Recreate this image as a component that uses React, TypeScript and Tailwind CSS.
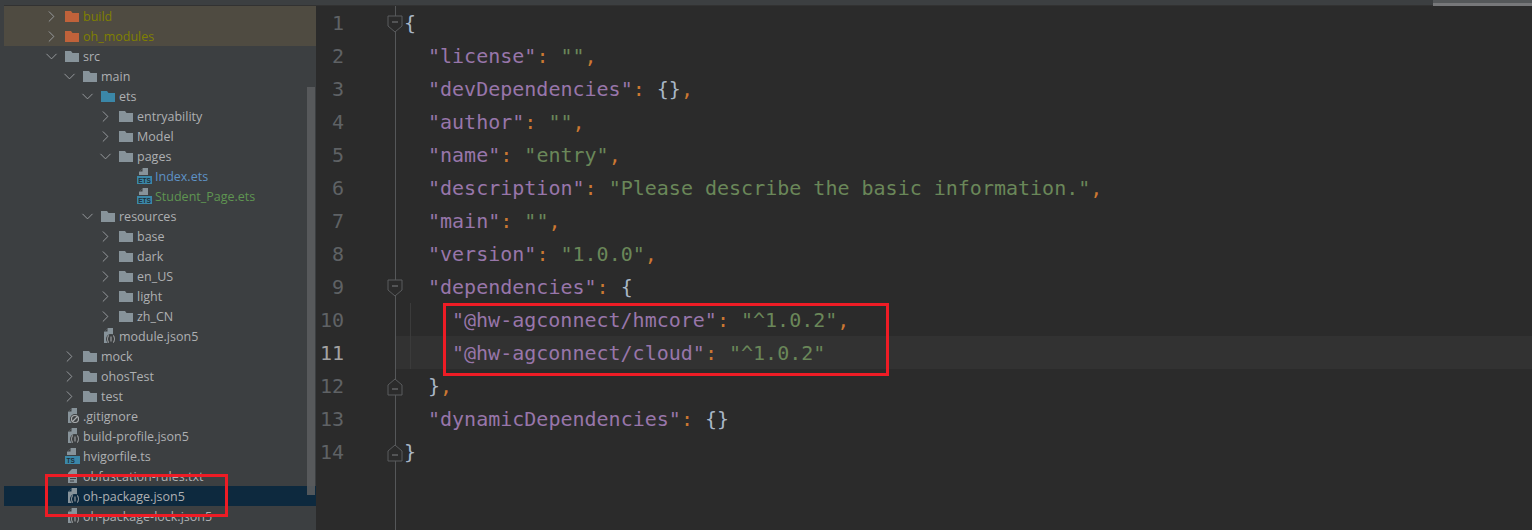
import { ChevronDown, ChevronRight } from 'lucide-react'

type Kind = 'folder' | 'ets' | 'ts' | 'json' | 'git' | 'txt'

interface TreeRow {
  name: string
  depth: number
  kind: Kind
  open?: boolean
  color?: string
  iconColor?: string
  tint?: string
}

const treeRows: TreeRow[] = [
  { name: 'build', depth: 0, kind: 'folder', open: false, color: '#808000', iconColor: '#c0623a', tint: '#4f4b41' },
  { name: 'oh_modules', depth: 0, kind: 'folder', open: false, color: '#808000', iconColor: '#c0623a', tint: '#4f4b41' },
  { name: 'src', depth: 0, kind: 'folder', open: true },
  { name: 'main', depth: 1, kind: 'folder', open: true },
  { name: 'ets', depth: 2, kind: 'folder', open: true, iconColor: '#3b87a8' },
  { name: 'entryability', depth: 3, kind: 'folder', open: false },
  { name: 'Model', depth: 3, kind: 'folder', open: false },
  { name: 'pages', depth: 3, kind: 'folder', open: true },
  { name: 'Index.ets', depth: 4, kind: 'ets', color: '#5e92c6' },
  { name: 'Student_Page.ets', depth: 4, kind: 'ets', color: '#5f9551' },
  { name: 'resources', depth: 2, kind: 'folder', open: true },
  { name: 'base', depth: 3, kind: 'folder', open: false },
  { name: 'dark', depth: 3, kind: 'folder', open: false },
  { name: 'en_US', depth: 3, kind: 'folder', open: false },
  { name: 'light', depth: 3, kind: 'folder', open: false },
  { name: 'zh_CN', depth: 3, kind: 'folder', open: false },
  { name: 'module.json5', depth: 2, kind: 'json' },
  { name: 'mock', depth: 1, kind: 'folder', open: false },
  { name: 'ohosTest', depth: 1, kind: 'folder', open: false },
  { name: 'test', depth: 1, kind: 'folder', open: false },
  { name: '.gitignore', depth: 0, kind: 'git' },
  { name: 'build-profile.json5', depth: 0, kind: 'json' },
  { name: 'hvigorfile.ts', depth: 0, kind: 'ts' },
  { name: 'obfuscation-rules.txt', depth: 0, kind: 'txt' },
  { name: 'oh-package.json5', depth: 0, kind: 'json', tint: '#0d293e' },
  { name: 'oh-package-lock.json5', depth: 0, kind: 'json' },
]

function RowIcon({ kind, color, bg }: { kind: Kind; color?: string; bg: string }) {
  if (kind === 'folder') {
    return (
      <svg width="14" height="11" viewBox="0 0 14 11" className="shrink-0">
        <path d="M0 0h6l1.500 2H14v9H0z" fill={color ?? '#87939a'} />
      </svg>
    )
  }
  if (kind === 'ets' || kind === 'ts') {
    return (
      <svg width="15" height="16" viewBox="0 0 15 16" className="shrink-0">
        <path d="M6 0h5v7H2V4z" fill="#87939a" />
        <path d="M5.500 0.500 2.500 3.500h3z" fill={bg} />
        <rect x="0" y="8" width="15" height="8" fill="#3b87a8" />
        <text x={kind === 'ets' ? 7.5 : 1.5} y="14.500" fontSize="6.500" fontWeight="700" fill="#1f2f38" textAnchor={kind === 'ets' ? 'middle' : 'start'} fontFamily="Liberation Sans, sans-serif">{kind === 'ets' ? 'ETS' : 'TS'}</text>
      </svg>
    )
  }
  if (kind === 'txt') {
    return (
      <svg width="15" height="16" viewBox="0 0 15 16" className="shrink-0">
        <path d="M7 1h5v14H3V5z" fill="#87939a" />
        <path d="M5 8h6M5 10.500h6M5 13h4" stroke="#3c3f41" strokeWidth="1.200" />
      </svg>
    )
  }
  return (
    <svg width="15" height="16" viewBox="0 0 15 16" className="shrink-0">
      <path d="M7 0h5v15H3V4z" fill="#87939a" />
      <path d="M6.500 0.500 3.500 3.500h3z" fill={bg} />
      <circle cx="10" cy="11" r="5" fill={bg} />
      {kind === 'git' ? (
        <g fill="none" stroke="#a9acae" strokeWidth="1.200">
          <circle cx="10" cy="11" r="3.500" />
          <path d="M7.500 13.500l5-5" />
        </g>
      ) : (
        <g fill="none" stroke="#a9acae" strokeWidth="1">
          <path d="M8 7.500c-2 .5-.5 3-2 3.500 1.500.5 0 3 2 3.500" />
          <path d="M12 7.500c2 .5.5 3 2 3.500-1.500.5 0 3-2 3.500" />
          <path d="M10 8.500v5" />
        </g>
      )}
    </svg>
  )
}

function ProjectTree() {
  return (
    <div className="relative w-[316px] shrink-0 bg-[#3c3f41] pl-[4px] font-['Open_Sans','Liberation_Sans',sans-serif] text-[12.5px] overflow-hidden">
      <div className="h-[6px] border-b border-[#323232]" />
      {treeRows.map((row) => (
        <div
          key={row.name}
          className="flex h-[20px] items-center"
          style={{ backgroundColor: row.tint, paddingLeft: 40 + row.depth * 18 }}
        >
          <div className="flex w-[14px] shrink-0 justify-center text-[#9a9da0]">
            {row.kind === 'folder' && (row.open
              ? <ChevronDown size={19} strokeWidth={1.2} className="shrink-0" />
              : <ChevronRight size={19} strokeWidth={1.2} className="shrink-0" />)}
          </div>
          <div className="ml-[7px] flex w-[18px] shrink-0">
            <RowIcon kind={row.kind} color={row.iconColor} bg={row.tint ?? '#3c3f41'} />
          </div>
          <span className="whitespace-nowrap pt-[2px]" style={{ color: row.color ?? '#aeb0b2' }}>{row.name}</span>
        </div>
      ))}
      <div className="absolute left-[307px] top-[87px] h-[408px] w-[8px] bg-[#5a5c5e]/90" />
      <div className="absolute left-[45px] top-[474px] h-[43px] w-[183px] border-[3px] border-[#ee1c25]" />
    </div>
  )
}

const K = ({ children }: { children: string }) => <span className="text-[#9876aa]">{children}</span>
const S = ({ children }: { children: string }) => <span className="text-[#6a8759]">{children}</span>
const P = ({ children }: { children: string }) => <span className="text-[#cc7832]">{children}</span>
const B = ({ children }: { children: string }) => <span className="text-[#a9b7c6]">{children}</span>

type Fold = 'open' | 'close' | undefined

const codeLines: { fold?: Fold; indent: number; content: React.ReactNode }[] = [
  { fold: 'open', indent: 0, content: <B>{'{'}</B> },
  { indent: 1, content: <><K>"license"</K><P>: </P><S>""</S><P>,</P></> },
  { indent: 1, content: <><K>"devDependencies"</K><P>: </P><B>{'{}'}</B><P>,</P></> },
  { indent: 1, content: <><K>"author"</K><P>: </P><S>""</S><P>,</P></> },
  { indent: 1, content: <><K>"name"</K><P>: </P><S>"entry"</S><P>,</P></> },
  { indent: 1, content: <><K>"description"</K><P>: </P><S>"Please describe the basic information."</S><P>,</P></> },
  { indent: 1, content: <><K>"main"</K><P>: </P><S>""</S><P>,</P></> },
  { indent: 1, content: <><K>"version"</K><P>: </P><S>"1.0.0"</S><P>,</P></> },
  { fold: 'open', indent: 1, content: <><K>"dependencies"</K><P>: </P><B>{'{'}</B></> },
  { indent: 2, content: <><K>"@hw-agconnect/hmcore"</K><P>: </P><S>"^1.0.2"</S><P>,</P></> },
  { indent: 2, content: <><K>"@hw-agconnect/cloud"</K><P>: </P><S>"^1.0.2"</S></> },
  { fold: 'close', indent: 1, content: <><B>{'}'}</B><P>,</P></> },
  { indent: 1, content: <><K>"dynamicDependencies"</K><P>: </P><B>{'{}'}</B></> },
  { fold: 'close', indent: 0, content: <B>{'}'}</B> },
]

function FoldMark({ type }: { type: 'open' | 'close' }) {
  const d = type === 'open' ? 'M1 1h14v10l-7 6-7-6z' : 'M1 17h14V7L8 1 1 7z'
  return (
    <svg width="16" height="18" viewBox="0 0 16 18" className="absolute -right-[8px] top-[9px]">
      <path d={d} fill="#2b2b2b" stroke="#5a5c5e" />
      <path d={type === 'open' ? 'M5 7h6' : 'M5 11h6'} stroke="#7d7f81" />
    </svg>
  )
}

function Editor() {
  return (
    <div className="relative flex min-w-0 flex-1 flex-col bg-[#2b2b2b] font-['DejaVu_Sans_Mono','Liberation_Mono',monospace] text-[20px]">
      <div className="flex h-[6px] shrink-0 justify-end border-b border-[#323232] bg-[#3c3f41]">
        <div className="flex h-[6px] w-[99px] flex-col bg-[#55585a]">
          <div className="mt-[3px] h-[3px] bg-[#77787a]" />
        </div>
      </div>
      {codeLines.map((line, i) => (
        <div key={i} className={`flex h-[33px] items-center ${i === 10 ? 'bg-[#323232]' : ''}`}>
          <div className="relative flex h-full w-[80px] shrink-0 items-center justify-end border-r border-[#555759] bg-[#2b2b2b] pr-[51px]">
            <span className={i === 10 ? 'text-[#a4a3a3]' : 'text-[#5f6265]'}>{i + 1}</span>
            {line.fold && <FoldMark type={line.fold} />}
          </div>
          <div className="relative flex h-full items-center whitespace-pre pl-[8px]">
            {line.indent === 2 && <div className="absolute left-[14px] top-0 h-full w-px bg-[#3b3b3b]" />}
            <span style={{ paddingLeft: line.indent * 24 }}>{line.content}</span>
          </div>
        </div>
      ))}
      <div className="w-[80px] flex-1 border-r border-[#555759]" />
      <div className="absolute left-[127px] top-[303px] h-[73px] w-[446px] border-[3px] border-[#ee1c25]" />
    </div>
  )
}

export default function App() {
  return (
    <div className="flex h-[530px] w-[1532px] overflow-hidden">
      <ProjectTree />
      <Editor />
    </div>
  )
}
